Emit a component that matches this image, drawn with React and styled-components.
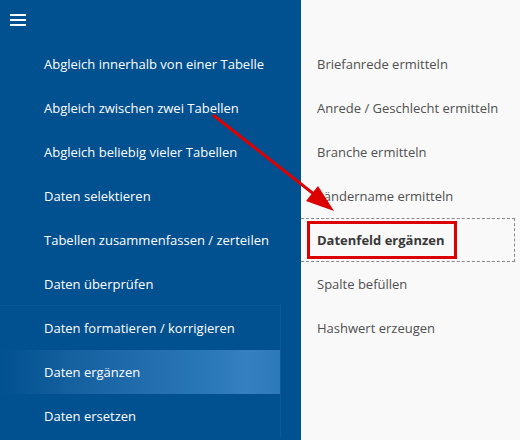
import styled, { createGlobalStyle } from "styled-components";

const Global = createGlobalStyle`
  html, body { margin: 0; padding: 0; }
  body {
    width: 520px;
    height: 440px;
    overflow: hidden;
    font-family: "Open Sans", "Noto Sans", sans-serif;
  }
`;

const Screen = styled.div`
  position: relative;
  display: flex;
  width: 520px;
  height: 440px;
  overflow: hidden;
`;

const Nav = styled.div`
  width: 301px;
  background: #01508f;
  display: flex;
  flex-direction: column;
`;

const Header = styled.div`
  height: 42px;
  display: flex;
  align-items: flex-start;
  padding: 14px 0 0 10px;
  box-sizing: border-box;
`;

const Burger = styled.div`
  width: 16px;
  display: flex;
  flex-direction: column;
  gap: 3px;
  span {
    display: block;
    height: 2px;
    background: #fff;
  }
`;

const NavItem = styled.div`
  height: 44px;
  display: flex;
  align-items: center;
  padding-left: 44px;
  font-size: 13px;
  color: #fff;
  background: ${(p) =>
    p.$active
      ? "linear-gradient(90deg, #01508f 0%, #15609f 25%, #2b78b9 75%, #3480c1 88%, #2d79ba 100%)"
      : "transparent"};
`;

const Group = styled.div`
  width: 280px;
  border-top: 1px solid rgba(255, 255, 255, 0.03);
  border-right: 1px solid rgba(255, 255, 255, 0.05);
  margin-top: -1px;
`;

const Side = styled.div`
  flex: 1;
  background: #f9f9f9;
  display: flex;
  flex-direction: column;
  padding-top: 42px;
`;

const SideItem = styled.div`
  height: 44px;
  display: flex;
  align-items: center;
  padding-left: 16px;
  font-size: 13px;
  color: ${(p) => (p.$bold ? "#383838" : "#505050")};
  font-weight: ${(p) => (p.$bold ? 700 : 400)};
  box-sizing: border-box;
  margin-right: 5px;
  border: 1px dashed ${(p) => (p.$bold ? "#888" : "transparent")};
  border-left: none;
  position: relative;
`;

const Marker = styled.span`
  position: absolute;
  left: 6px;
  top: 2px;
  width: 150px;
  height: 38px;
  box-sizing: border-box;
  border: 3px solid #dd0000;
`;

const Arrow = styled.svg`
  position: absolute;
  left: 0;
  top: 0;
  pointer-events: none;
`;

const top = [
  "Abgleich innerhalb von einer Tabelle",
  "Abgleich zwischen zwei Tabellen",
  "Abgleich beliebig vieler Tabellen",
  "Daten selektieren",
  "Tabellen zusammenfassen / zerteilen",
  "Daten überprüfen",
];

const lower = ["Daten formatieren / korrigieren", "Daten ergänzen", "Daten ersetzen"];

const right = [
  "Briefanrede ermitteln",
  "Anrede / Geschlecht ermitteln",
  "Branche ermitteln",
  "Ländername ermitteln",
  "Datenfeld ergänzen",
  "Spalte befüllen",
  "Hashwert erzeugen",
];

export default function App() {
  return (
    <Screen>
      <Global />
      <Nav>
        <Header>
          <Burger>
            <span />
            <span />
            <span />
          </Burger>
        </Header>
        {top.map((t) => (
          <NavItem key={t}>{t}</NavItem>
        ))}
        <Group>
          {lower.map((t) => (
            <NavItem key={t} $active={t === "Daten ergänzen"}>
              {t}
            </NavItem>
          ))}
        </Group>
      </Nav>
      <Side>
        {right.map((t) => (
          <SideItem key={t} $bold={t === "Datenfeld ergänzen"}>
            {t === "Datenfeld ergänzen" && <Marker />}
            {t}
          </SideItem>
        ))}
      </Side>
      <Arrow width="520" height="440">
        <line x1="213" y1="115" x2="315" y2="195" stroke="#dd0000" strokeWidth="3" />
        <polygon points="334,211 306,201 318,186" fill="#dd0000" />
      </Arrow>
    </Screen>
  );
}
